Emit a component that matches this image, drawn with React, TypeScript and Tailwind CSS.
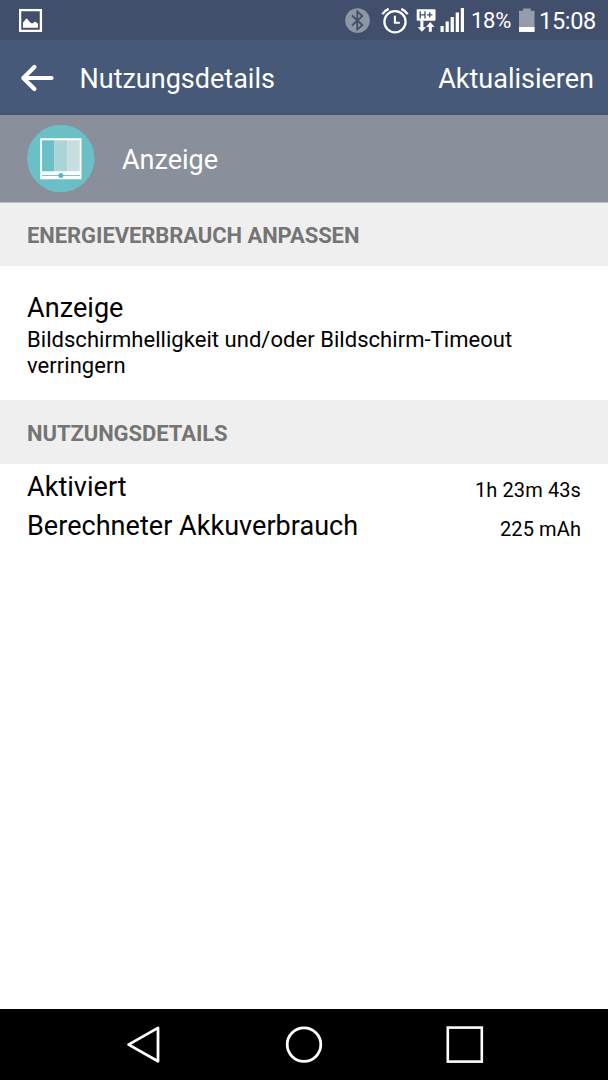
import type { ReactNode } from "react";

function PictureIcon() {
  return (
    <svg className="ml-[19px] mt-2 h-6 w-6 shrink-0" viewBox="0 0 24 24" fill="none">
      <rect x="1.1" y="2.1" width="20.8" height="20.8" stroke="#fff" strokeWidth="2.3" />
      <path d="M4 19.8v-5.6l1.2-.8 1-2 1.3-1 1.5 1 .8 1.6 1.5 1.4 1.7 1 1.5-.6 1.3-1.2 1.6.8 1.6 1.4v4z" fill="#fff" />
    </svg>
  );
}

function BluetoothIcon() {
  return (
    <svg className="mt-2 h-[25px] w-[25px] shrink-0" viewBox="0 0 25 25" fill="none">
      <circle cx="12.5" cy="12.5" r="12.3" fill="#8e96a3" />
      <path d="M7 7.5l10.4 9.5-5.1 4.6V3.4l5.1 4.6L7 17.5" stroke="#414f6c" strokeWidth="1.8" />
    </svg>
  );
}

function AlarmIcon() {
  return (
    <svg className="ml-[11px] mt-[7px] h-[27px] w-7 shrink-0" viewBox="0 0 28 27" fill="none" stroke="#fff">
      <circle cx="14" cy="14.8" r="10.6" strokeWidth="2.3" />
      <path d="M1.4 7.3C2.8 4.7 4.9 3 7.7 1.8M26.6 7.3C25.2 4.7 23.1 3 20.3 1.8" strokeWidth="2.4" />
      <path d="M13.9 8.8v7h5" strokeWidth="2.1" />
    </svg>
  );
}

function DataIcon() {
  return (
    <svg className="ml-[7px] mt-2 h-[25px] w-[21px] shrink-0" viewBox="0 0 21 25" fill="none">
      <rect x=".7" y="1.2" width="18.8" height="11.6" rx="1" fill="#fff" />
      <path d="M4.2 3.2v7.2M9 3.2v7.2M4.2 6.8H9M11 6.8h5.4M13.7 4.2v5.2" stroke="#414f6c" strokeWidth="1.3" />
      <path d="M4.4 12.5v6.7H1.7l4.2 4.6 4.2-4.6H7.4v-6.7z" fill="#fff" />
      <path d="M12.8 23.8V19h-2.7l4.2-5 4.2 5h-2.7v4.8z" fill="#fff" />
    </svg>
  );
}

function SignalIcon() {
  return (
    <svg className="ml-[3px] mt-2 h-6 w-[25px] shrink-0" viewBox="0 0 25 24" fill="#fff">
      <path d="M.5 18h3.2v6H.5zM5.6 13.5h3.2V24H5.6zM10.6 9h3.3v15h-3.3zM15.7 4.5H19V24h-3.3zM20.8 0H24v24h-3.2z" />
    </svg>
  );
}

function BatteryIcon() {
  return (
    <svg className="ml-[8px] mt-2 h-6 w-4 shrink-0" viewBox="0 0 16 24">
      <path d="M0 2.7h4V.4h7.7v2.3h3.8v21.2H0z" fill="#969daa" />
      <path d="M0 19h15.5v4.9H0z" fill="#fff" />
    </svg>
  );
}

function DisplayIcon() {
  return (
    <svg className="h-[68px] w-[68px] shrink-0" viewBox="0 0.5 68 68">
      <circle cx="33.8" cy="34" r="33.7" fill="#6bc0c7" />
      <path d="M13.2 13.7h41.3V54.8H13.2z" fill="#fff" />
      <path d="M15 15.8h12.5v31H15z" fill="#6bc0c7" />
      <path d="M27.5 15.8h13v31h-13z" fill="#abd3d6" />
      <path d="M40.5 15.8h12.3v31H40.5z" fill="#c8dde0" />
      <path d="M15 50.6h38v1H15z" fill="#7ec6cc" />
      <circle cx="33.9" cy="51" r="2.5" fill="#57b6bf" />
    </svg>
  );
}

function SectionHeader({ className, children }: { className: string; children: ReactNode }) {
  return (
    <h2
      className={`${className} shrink-0 bg-[#efefef] pl-[27px] text-[22px] font-bold leading-[26px] tracking-[-0.07px] text-[#757575]`}
    >
      {children}
    </h2>
  );
}

export default function App() {
  return (
    <div className="flex h-[1080px] w-[608px] flex-col overflow-hidden whitespace-nowrap bg-white font-['Roboto',sans-serif] text-black">
      <div className="flex h-10 shrink-0 items-start bg-[#414f6c] text-white">
        <PictureIcon />
        <div className="ml-auto flex items-start pr-3">
          <BluetoothIcon />
          <AlarmIcon />
          <DataIcon />
          <SignalIcon />
          <span className="ml-[6px] mt-[6px] w-10 text-[22px] leading-[30px] tracking-[-0.3px]">18%</span>
          <BatteryIcon />
          <span className="ml-1 mt-[6px] w-[57px] text-[23.5px] leading-[31px] tracking-[-0.3px]">15:08</span>
        </div>
      </div>

      <header className="flex h-[75px] shrink-0 items-center border-b border-[#3f506f] bg-[#465978] text-[27px] text-white">
        <button aria-label="Zurück" className="ml-5 h-9 w-9 pt-px">
          <svg className="h-9 w-9" viewBox="0 0 36 36" fill="none" stroke="#fff" strokeWidth="4.2" strokeLinecap="round" strokeLinejoin="round">
            <path d="M14.4 7L3.3 18l11.1 11M4 18h27.5" />
          </svg>
        </button>
        <h1 className="ml-[23.5px] pt-1">Nutzungsdetails</h1>
        <button className="ml-auto pr-[14px] pt-1">Aktualisieren</button>
      </header>

      <div className="flex h-[88px] shrink-0 items-center gap-[27px] border-b border-[#b9bdc4] bg-[#898f9b] pl-[27px] text-[27px] text-white">
        <DisplayIcon />
        <span className="pt-[3px]">Anzeige</span>
      </div>

      <SectionHeader className="h-[63px] pt-5">ENERGIEVERBRAUCH ANPASSEN</SectionHeader>
      <div className="h-[134px] shrink-0 px-[27px] pt-[25px]">
        <p className="text-[27px] leading-[34px] tracking-[0.06px]">Anzeige</p>
        <p className="mt-[2px] text-[22px] leading-[26px] tracking-[0.04px]">
          Bildschirmhelligkeit und/oder Bildschirm-Timeout
          <br />
          verringern
        </p>
      </div>

      <SectionHeader className="h-16 pt-[21px]">NUTZUNGSDETAILS</SectionHeader>
      <dl className="flex-1 px-[27px] pt-1">
        <div className="flex h-[39px] items-start justify-between">
          <dt className="text-[27px] leading-[39px] tracking-[0.04px]">Aktiviert</dt>
          <dd className="pt-[6px] text-[20px] leading-[32px] tracking-[0.1px]">1h 23m 43s</dd>
        </div>
        <div className="flex h-[39px] items-start justify-between">
          <dt className="text-[27px] leading-[39px] tracking-[0.04px]">Berechneter Akkuverbrauch</dt>
          <dd className="pt-[6px] text-[20px] leading-[32px] tracking-[0.1px]">225 mAh</dd>
        </div>
      </dl>

      <nav className="flex h-[71px] shrink-0 items-center bg-black pl-[126px]">
        <button aria-label="Zurück">
          <svg className="h-10 w-9" viewBox="0 0 36 40" fill="none" stroke="#fff" strokeWidth="2.8" strokeLinejoin="round">
            <path d="M32 2.9v33.4L2.6 19.6z" />
          </svg>
        </button>
        <button aria-label="Startbildschirm" className="ml-[122px]">
          <svg className="h-10 w-10" viewBox="0 0 40 40" fill="none" stroke="#fff" strokeWidth="2.8">
            <circle cx="20" cy="19.6" r="16.8" />
          </svg>
        </button>
        <button aria-label="Letzte Apps" className="ml-[121px]">
          <svg className="h-10 w-10" viewBox="0 0 40 40" fill="none" stroke="#fff" strokeWidth="2.6">
            <rect x="2.8" y="2.6" width="34" height="34" />
          </svg>
        </button>
      </nav>
    </div>
  );
}
